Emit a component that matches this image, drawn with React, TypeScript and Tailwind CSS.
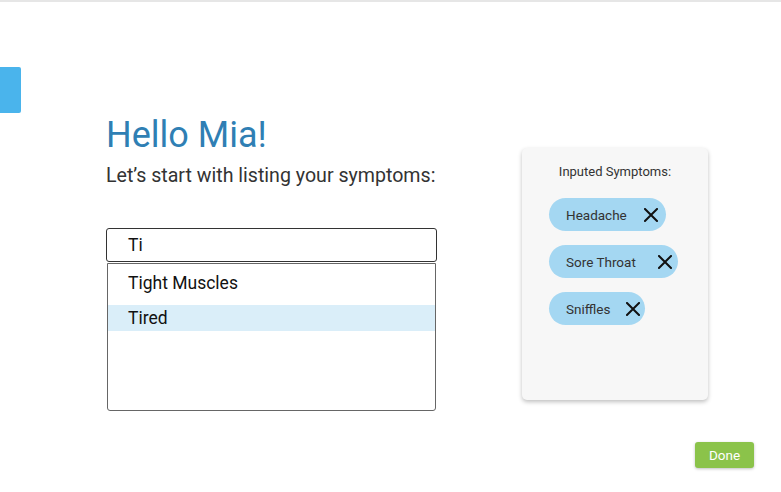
import * as React from "react";

type Chip = { label: string; width: string; pr: string };

const chips: Chip[] = [
  { label: "Headache", width: "w-[117px]", pr: "pr-[8px]" },
  { label: "Sore Throat", width: "w-[129px]", pr: "pr-[6px]" },
  { label: "Sniffles", width: "w-[96px]", pr: "pr-[5px]" },
];

function CloseIcon() {
  return (
    <svg width="14" height="14" viewBox="0 0 14 14" fill="none" aria-hidden="true">
      <path d="M1 1L13 13M13 1L1 13" stroke="#111" strokeWidth="2" strokeLinecap="square" />
    </svg>
  );
}

function SymptomChip({ chip }: { chip: Chip }) {
  return (
    <div className={`flex h-[33px] items-center rounded-full bg-[#a4d7f2] pl-[17px] ${chip.width} ${chip.pr}`}>
      <span className="text-[13.5px] leading-5 text-[#333]">{chip.label}</span>
      <span className="ml-auto flex">
        <CloseIcon />
      </span>
    </div>
  );
}

export default function App() {
  return (
    <div
      className="relative h-[492px] w-[781px] overflow-hidden border-t-2 border-[#e6e6e6] bg-white"
      style={{ fontFamily: "Roboto, 'Noto Sans', sans-serif" }}
    >
      {/* side drawer handle */}
      <div className="absolute left-0 top-[65px] h-[46px] w-[21px] rounded-r-[2px] bg-[#4ab4ec]" />

      <div className="flex pl-[106px] pt-[112px]">
        {/* left column */}
        <div className="flex w-[331px] flex-col">
          <h1 className="text-[36px] leading-[42px] font-normal text-[#2f7fb4]">Hello Mia!</h1>
          <p className="mt-2 whitespace-nowrap text-[19.6px] leading-6 text-[#333]">
            Let’s start with listing your symptoms:
          </p>

          <div className="mt-[40px] flex h-[34px] items-center rounded-[3px] border border-[#333] pl-[21px] text-[17.5px] text-[#111]">
            Ti
          </div>

          <div className="mx-px mt-px flex h-[148px] flex-col rounded-b-[3px] border border-[#666] pt-[6px]">
            <div className="flex h-[26px] items-center pl-[20px] text-[17.5px] text-[#111]">Tight Muscles</div>
            <div className="mt-[9px] flex h-[26px] items-center bg-[#daeef9] pl-[20px] text-[17.5px] text-[#111]">
              Tired
            </div>
          </div>
        </div>

        {/* inputed symptoms card */}
        <div className="ml-[85px] mt-[34px] h-[252px] w-[186px] rounded-[5px] bg-[#f7f7f7] pt-[14px] shadow-[0_2px_4px_rgba(0,0,0,0.25)]">
          <div className="text-center text-[13px] leading-5 text-[#333]">Inputed Symptoms:</div>
          <div className="mt-[16px] flex flex-col gap-[14px] pl-[27px]">
            {chips.map((c) => (
              <SymptomChip key={c.label} chip={c} />
            ))}
          </div>
        </div>
      </div>

      <div className="mt-[31px] flex justify-end pr-[27px]">
        <button className="h-[26px] w-[59px] rounded-[3px] bg-[#8bc34a] text-[13.5px] text-white shadow-[0_1px_3px_rgba(0,0,0,0.25)]">
          Done
        </button>
      </div>
    </div>
  );
}
